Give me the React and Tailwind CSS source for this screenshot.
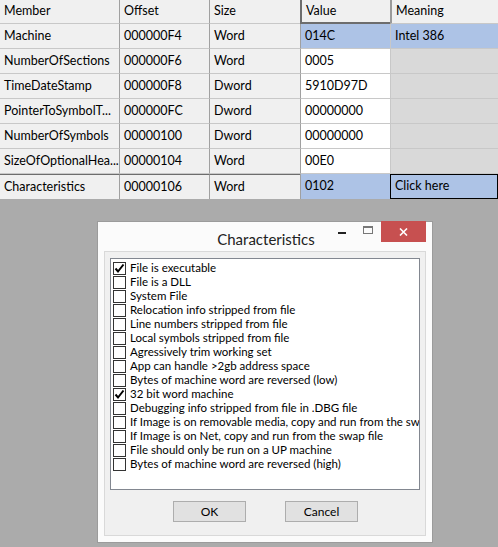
import React from 'react'

const ROWS = [
  { member: 'Machine', offset: '000000F4', size: 'Word', value: '014C', meaning: 'Intel 386', sel: true },
  { member: 'NumberOfSections', offset: '000000F6', size: 'Word', value: '0005' },
  { member: 'TimeDateStamp', offset: '000000F8', size: 'Dword', value: '5910D97D' },
  { member: 'PointerToSymbolT...', offset: '000000FC', size: 'Dword', value: '00000000' },
  { member: 'NumberOfSymbols', offset: '00000100', size: 'Dword', value: '00000000' },
  { member: 'SizeOfOptionalHea...', offset: '00000104', size: 'Word', value: '00E0' },
]

const FLAGS = [
  ['File is executable', true],
  ['File is a DLL', false],
  ['System File', false],
  ['Relocation info stripped from file', false],
  ['Line numbers stripped from file', false],
  ['Local symbols stripped from file', false],
  ['Agressively trim working set', false],
  ['App can handle >2gb address space', false],
  ['Bytes of machine word are reversed (low)', false],
  ['32 bit word machine', true],
  ['Debugging info stripped from file in .DBG file', false],
  ['If Image is on removable media, copy and run from the swap file', false],
  ['If Image is on Net, copy and run from the swap file', false],
  ['File should only be run on a UP machine', false],
  ['Bytes of machine word are reversed (high)', false],
]

const font = { fontFamily: 'Lato, "Noto Sans", sans-serif' }

function Cell({ children, className = '' }) {
  return (
    <div className={`flex items-center pl-[4px] overflow-hidden whitespace-nowrap ${className}`}>
      {children}
    </div>
  )
}

function Check({ on }) {
  return (
    <span className="w-[13px] h-[13px] border border-[#333] bg-white flex items-center justify-center shrink-0">
      {on && (
        <svg width="11" height="11" viewBox="0 0 11 11">
          <path d="M1.5 5.5 L4 8.5 L9.5 1.5" fill="none" stroke="#000" strokeWidth="2" />
        </svg>
      )}
    </span>
  )
}

export default function App() {
  return (
    <div className="w-[498px] h-[547px] bg-[#ababab] overflow-hidden text-[12.5px] text-black" style={font}>
      {/* grid */}
      <div className="grid grid-cols-[120px_90px_90px_90px_108px]">
        <Cell className="h-[24px] bg-[#f0f0f0] border-r border-r-[#a0a0a0] border-b border-b-[#c8c8c8]">Member</Cell>
        <Cell className="h-[24px] bg-[#f0f0f0] border-r border-r-[#a0a0a0] border-b border-b-[#c8c8c8]">Offset</Cell>
        <Cell className="h-[24px] bg-[#f0f0f0] border-b border-b-[#c8c8c8]">Size</Cell>
        <Cell className="h-[24px] bg-[#f0f0f0] border-l-2 border-l-[#6d6d6d] border-b-2 border-b-[#6d6d6d]">Value</Cell>
        <Cell className="h-[24px] bg-[#f0f0f0] border-l-2 border-l-[#9a9a9a] border-b border-b-[#c8c8c8]">Meaning</Cell>
        {ROWS.map((r) => (
          <React.Fragment key={r.member}>
            <Cell className="h-[25px] bg-[#f0f0f0] border-r border-r-[#a0a0a0] border-b border-b-[#c8c8c8]">{r.member}</Cell>
            <Cell className="h-[25px] bg-[#f0f0f0] border-r border-r-[#a0a0a0] border-b border-b-[#c8c8c8]">{r.offset}</Cell>
            <Cell className="h-[25px] bg-[#f0f0f0] border-b border-b-[#c8c8c8]">{r.size}</Cell>
            <Cell className={`h-[25px] border-l border-l-[#a0a0a0] border-b border-b-[#c8c8c8] ${r.sel ? 'bg-[#adc3e6]' : 'bg-white'}`}>{r.value}</Cell>
            <Cell className={`h-[25px] border-l border-l-[#c8c8c8] border-b border-b-[#c8c8c8] ${r.sel ? 'bg-[#adc3e6]' : 'bg-[#d9d9d9]'}`}>{r.meaning}</Cell>
          </React.Fragment>
        ))}
        <Cell className="h-[25px] bg-[#f0f0f0] border-r border-r-[#a0a0a0] border-t border-t-[#6d6d6d]">Characteristics</Cell>
        <Cell className="h-[25px] bg-[#f0f0f0] border-r border-r-[#a0a0a0] border-t border-t-[#6d6d6d]">00000106</Cell>
        <Cell className="h-[25px] bg-[#f0f0f0] border-t border-t-[#6d6d6d]">Word</Cell>
        <Cell className="h-[25px] bg-[#adc3e6] border-l border-l-[#a0a0a0]">0102</Cell>
        <Cell className="h-[25px] bg-[#adc3e6] border border-black pl-[3px]">Click here</Cell>
      </div>

      {/* dialog */}
      <div className="ml-[97px] mt-[22px] w-[336px] h-[322px] bg-[#fbfbfb] border border-[#9b9b9b] flex flex-col">
        <div className="h-[29px] flex items-start relative">
          <div className="flex-1 text-center text-[15px] text-[#222] pt-[6px] pl-[2px]">Characteristics</div>
          <div className="absolute right-[6px] top-[-1px] flex items-center">
            <div className="w-[26px] h-[21px] flex items-center justify-center">
              <span className="block w-[8px] h-[2px] bg-[#222] mt-[2px]" />
            </div>
            <div className="w-[26px] h-[21px] flex items-center justify-center">
              <span className="block w-[10px] h-[8px] border border-[#777] border-t-2 mb-[3px]" />
            </div>
            <div className="w-[45px] h-[21px] bg-[#c75050] flex items-center justify-center">
              <svg width="9" height="8" viewBox="0 0 9 8">
                <path d="M1 0.5 L8 7.5 M8 0.5 L1 7.5" stroke="#fff" strokeWidth="1.6" />
              </svg>
            </div>
          </div>
        </div>
        <div className="mx-[6px] mb-[6px] flex-1 bg-[#f0f0f0] border border-[#d9d9d9] flex flex-col">
          <div className="mt-[6px] mx-[5px] h-[232px] bg-white border border-[#828790] pt-[2px] pl-[1px] overflow-hidden text-[11.5px]">
            {FLAGS.map(([label, on]) => (
              <div key={label} className="h-[14px] flex items-center gap-[4px] whitespace-nowrap pl-[1px]">
                <Check on={on} />
                <span className="leading-[14px]">{label}</span>
              </div>
            ))}
          </div>
          <div className="flex justify-center gap-[39px] mt-[11px] pl-[1px]">
            <button className="w-[73px] h-[21px] bg-[#e1e1e1] border border-[#adadad] text-[12px]">OK</button>
            <button className="w-[73px] h-[21px] bg-[#e1e1e1] border border-[#adadad] text-[12px]">Cancel</button>
          </div>
        </div>
      </div>
    </div>
  )
}
